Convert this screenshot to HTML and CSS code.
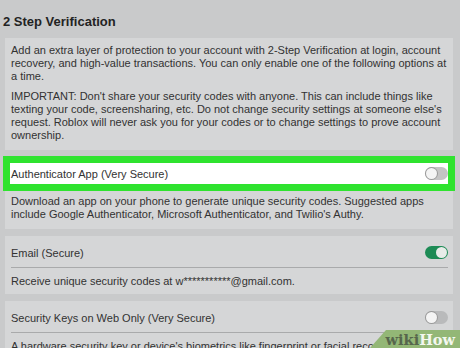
FILE: index.html
```html
<!DOCTYPE html>
<html lang="en">
<head>
    <meta charset="UTF-8">
    <meta name="viewport" content="width=device-width, initial-scale=1.0">
    <title>2 Step Verification</title>
    <link rel="stylesheet" href="styles.css">
</head>
<body>
    <div class="page">
        <h2 class="title">2 Step Verification</h2>

        <div class="card intro">
            <p>Add an extra layer of protection to your account with 2-Step Verification at login, account recovery, and high-value transactions. You can only enable one of the following options at a time.</p>
            <p>IMPORTANT: Don't share your security codes with anyone. This can include things like texting your code, screensharing, etc. Do not change security settings at someone else's request. Roblox will never ask you for your codes or to change settings to prove account ownership.</p>
        </div>

        <div class="card">
            <div class="row highlight">
                <span>Authenticator App (Very Secure)</span>
                <span class="toggle"></span>
            </div>
            <p class="desc first">Download an app on your phone to generate unique security codes. Suggested apps include Google Authenticator, Microsoft Authenticator, and Twilio's Authy.</p>
        </div>

        <div class="card compact">
            <div class="row">
                <span>Email (Secure)</span>
                <span class="toggle on"></span>
            </div>
            <div class="divider"></div>
            <p class="desc">Receive unique security codes at w***********@gmail.com.</p>
        </div>

        <div class="card">
            <div class="row">
                <span>Security Keys on Web Only (Very Secure)</span>
                <span class="toggle"></span>
            </div>
            <div class="divider"></div>
            <p class="desc">A hardware security key or device's biometrics like fingerprint or facial recognition.</p>
        </div>
    </div>

    <div class="watermark"><span class="wiki">wiki</span><span class="how">How</span></div>
</body>
</html>
```

FILE: styles.css
```css
body {
    margin: 0;
    background-color: #c9cacb;
    font-family: 'Liberation Sans', Arial, sans-serif;
    color: #323232;
    height: 348px;
    overflow: hidden;
    position: relative;
}

.page {
    padding: 0 7px 0 5px;
}

.title {
    margin: 0;
    padding: 14px 0 0 0;
    margin-left: -2px;
    height: 24px;
    font-size: 13px;
    font-weight: bold;
    color: #232323;
}

.card {
    background-color: #d5d6d7;
    padding: 6px 5px 8px 6px;
    margin-bottom: 7px;
}

.card.compact {
    padding-bottom: 6px;
}

.card p {
    margin: 0;
    font-size: 11px;
    line-height: 13px;
}

.intro p + p {
    margin-top: 7px;
}

.row {
    display: flex;
    justify-content: space-between;
    align-items: center;
    height: 21px;
    font-size: 11px;
}

.highlight {
    background-color: #ffffff;
    outline: 7px solid #2fe32f;
    margin-left: -1px;
    padding-left: 1px;
}

.toggle {
    width: 23px;
    height: 13px;
    border-radius: 7px;
    background-color: #b9babb;
    display: flex;
    align-items: center;
    padding: 0 1px;
    box-sizing: border-box;
}

.toggle::after {
    content: '';
    width: 11px;
    height: 11px;
    border-radius: 50%;
    background-color: #f4f4f4;
    box-shadow: 0 0 0 1px #9a9a9a;
}

.highlight .toggle {
    background-color: #c4c4c4;
}

.toggle.on {
    background-color: #1d8b55;
    justify-content: flex-end;
}

.toggle.on::after {
    box-shadow: none;
    background-color: #e8ece9;
}

.divider {
    height: 1px;
    background-color: #a9aaab;
    margin-top: 4px;
}

.desc {
    margin-top: 7px !important;
}

.desc.first {
    margin-top: 11px !important;
}

.watermark {
    position: absolute;
    right: 0;
    bottom: 0;
    width: 72px;
    height: 18px;
    padding: 0 5px 0 13px;
    background-color: #93b776;
    clip-path: polygon(16px 0, 100% 0, 100% 100%, 0 100%);
    font-family: 'DejaVu Serif', serif;
    font-weight: bold;
    font-size: 14.5px;
    line-height: 19px;
    text-align: right;
}

.wiki {
    color: #56664c;
}

.how {
    color: #f4f7f0;
}
```
